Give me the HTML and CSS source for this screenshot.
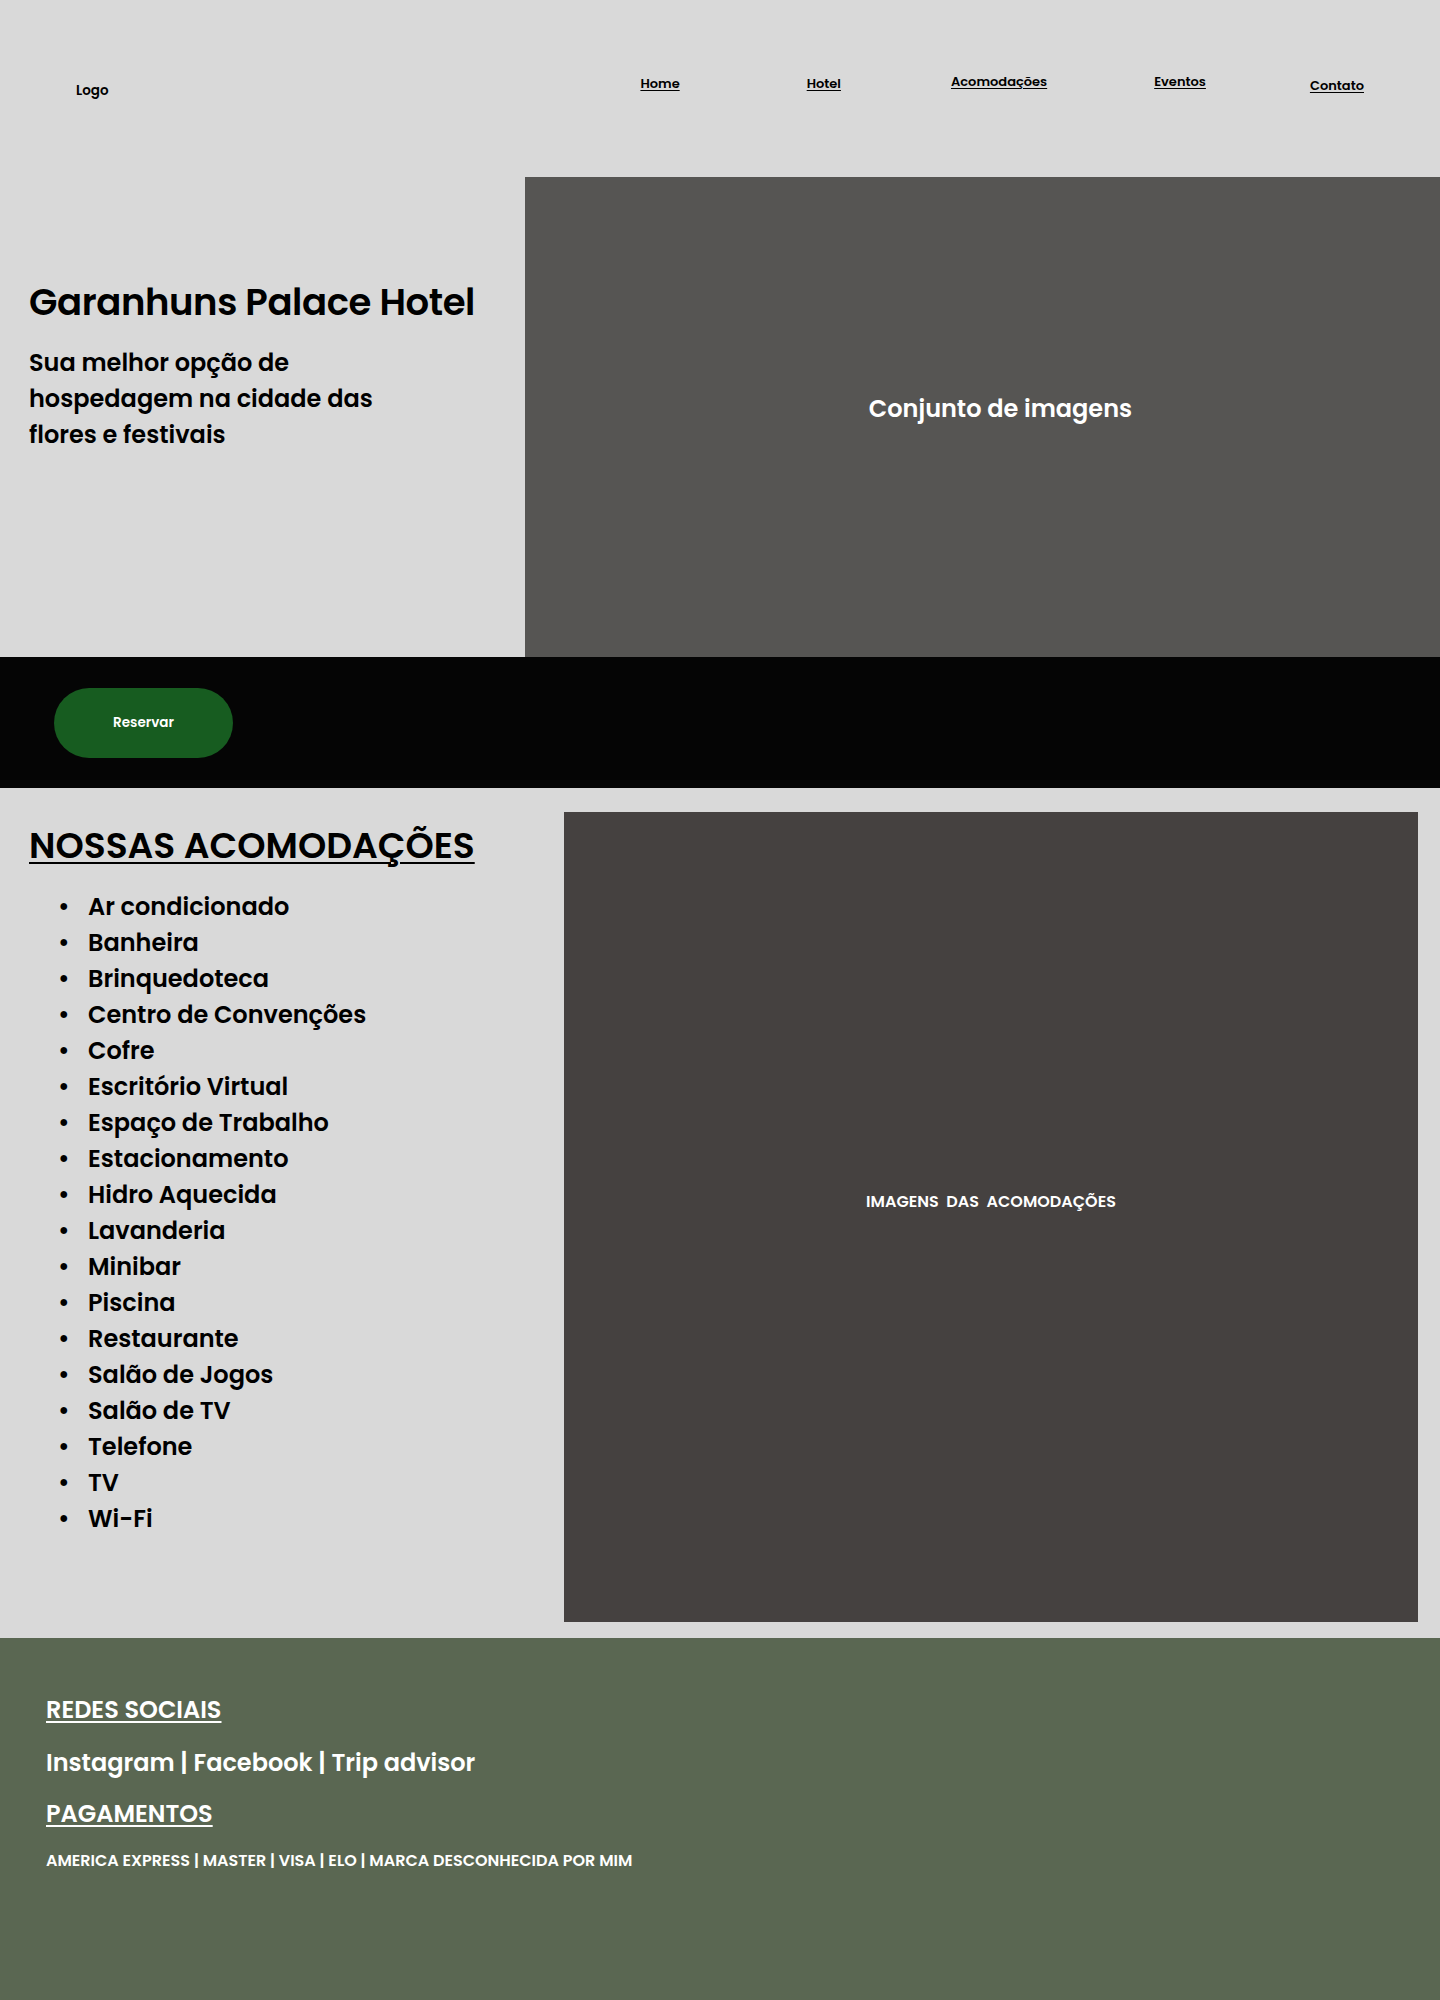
FILE: index.html
```html
<!DOCTYPE html>
<html lang="pt-BR">
<head>
<meta charset="utf-8">
<title>Garanhuns Palace Hotel</title>
<link rel="stylesheet" href="styles.css">
</head>
<body>
<header class="topbar">
  <div class="logo">Logo</div>
  <nav class="nav">
    <a class="nav-link nav-home" href="#">Home</a>
    <a class="nav-link nav-hotel" href="#">Hotel</a>
    <a class="nav-link nav-acom" href="#">Acomodações</a>
    <a class="nav-link nav-eventos" href="#">Eventos</a>
    <a class="nav-link nav-contato" href="#">Contato</a>
  </nav>
</header>

<section class="hero">
  <div class="hero-text">
    <h1 class="hero-title">Garanhuns Palace Hotel</h1>
    <p class="hero-sub">Sua melhor opção de hospedagem na cidade das flores e festivais</p>
  </div>
  <div class="hero-media">
    <span class="hero-media-label">Conjunto de imagens</span>
  </div>
</section>

<section class="book-band">
  <a class="btn-reservar" href="#">Reservar</a>
</section>

<section class="accom">
  <div class="accom-text">
    <h2 class="accom-title">NOSSAS ACOMODAÇÕES</h2>
    <ul class="accom-list">
      <li>Ar condicionado</li>
      <li>Banheira</li>
      <li>Brinquedoteca</li>
      <li>Centro de Convenções</li>
      <li>Cofre</li>
      <li>Escritório Virtual</li>
      <li>Espaço de Trabalho</li>
      <li>Estacionamento</li>
      <li>Hidro Aquecida</li>
      <li>Lavanderia</li>
      <li>Minibar</li>
      <li>Piscina</li>
      <li>Restaurante</li>
      <li>Salão de Jogos</li>
      <li>Salão de TV</li>
      <li>Telefone</li>
      <li>TV</li>
      <li>Wi-Fi</li>
    </ul>
  </div>
  <div class="accom-media">
    <span class="accom-media-label">IMAGENS&nbsp; DAS&nbsp; ACOMODAÇÕES</span>
  </div>
</section>

<footer class="footer">
  <h3 class="footer-head">REDES SOCIAIS</h3>
  <p class="footer-social">Instagram | Facebook | Trip advisor</p>
  <h3 class="footer-head">PAGAMENTOS</h3>
  <p class="footer-pay">AMERICA EXPRESS | MASTER | VISA | ELO | MARCA DESCONHECIDA POR MIM</p>
</footer>
</body>
</html>
```
FILE: styles.css
```css
* { box-sizing: border-box; }

body {
  margin: 0;
  background: #d9d9d9;
  color: #000;
  font-family: "Poppins", "Inter", "Open Sans", sans-serif;
}

h1, h2, h3, p, ul { margin: 0; }

/* Header */
.topbar {
  height: 177px;
  display: flex;
  align-items: center;
  padding: 0 76px;
}
.logo {
  font-size: 13.5px;
  font-weight: 600;
  margin-top: 4px;
}
.nav {
  display: flex;
  align-items: center;
  margin-left: auto;
  margin-top: -10px;
}
.nav-link {
  color: #000;
  font-size: 13px;
  font-weight: 600;
  text-decoration: underline;
  text-underline-offset: 2px;
}
.nav-hotel { margin-left: 127px; }
.nav-acom { margin-left: 110px; margin-top: -4px; }
.nav-eventos { margin-left: 107px; margin-top: -4px; }
.nav-contato { margin-left: 104px; margin-top: 4px; }

/* Hero */
.hero {
  display: grid;
  grid-template-columns: 525px 1fr;
  height: 480px;
}
.hero-text {
  padding: 102px 20px 0 29px;
}
.hero-title {
  font-size: 37px;
  font-weight: 600;
  line-height: 46px;
  letter-spacing: -0.4px;
}
.hero-sub {
  margin-top: 20px;
  width: 360px;
  font-size: 24px;
  font-weight: 600;
  line-height: 36px;
}
.hero-media {
  background: #565553;
  display: flex;
  align-items: center;
  justify-content: center;
  padding: 0 0 18px 36px;
}
.hero-media-label {
  color: #fff;
  font-size: 24px;
  font-weight: 600;
}

/* Booking band */
.book-band {
  background: #050505;
  height: 131px;
  display: flex;
  align-items: center;
  padding-left: 54px;
}
.btn-reservar {
  width: 179px;
  height: 70px;
  border-radius: 35px;
  background: #175c20;
  color: #fff;
  font-size: 13.5px;
  font-weight: 600;
  text-decoration: none;
  display: flex;
  align-items: center;
  justify-content: center;
}

/* Accommodations */
.accom {
  display: grid;
  grid-template-columns: 564px 1fr;
  padding: 24px 22px 16px 0;
  height: 850px;
}
.accom-text {
  padding: 12px 0 0 29px;
}
.accom-title {
  font-size: 36px;
  font-weight: 600;
  line-height: 43px;
  text-decoration: underline;
  text-decoration-thickness: 2px;
  text-underline-offset: 4px;
}
.accom-list {
  list-style: none;
  padding: 0 0 0 29px;
  margin-top: 22px;
}
.accom-list li {
  display: flex;
  font-size: 24px;
  font-weight: 600;
  line-height: 36px;
}
.accom-list li::before {
  content: "\2022";
  flex: none;
  width: 30px;
}
.accom-media {
  background: #454140;
  display: flex;
  align-items: center;
  justify-content: center;
  padding-bottom: 32px;
}
.accom-media-label {
  color: #fff;
  font-size: 16px;
  font-weight: 600;
}

/* Footer */
.footer {
  background: #5a6752;
  color: #fff;
  min-height: 362px;
  padding: 58px 46px 40px;
  display: flex;
  flex-direction: column;
  align-items: flex-start;
  gap: 22.5px;
}
.footer-head {
  font-size: 24px;
  font-weight: 600;
  line-height: 28px;
  text-decoration: underline;
  text-underline-offset: 3px;
}
.footer-social {
  font-size: 24px;
  font-weight: 600;
  line-height: 31px;
}
.footer-pay {
  font-size: 16px;
  font-weight: 600;
  line-height: 19px;
}
```
